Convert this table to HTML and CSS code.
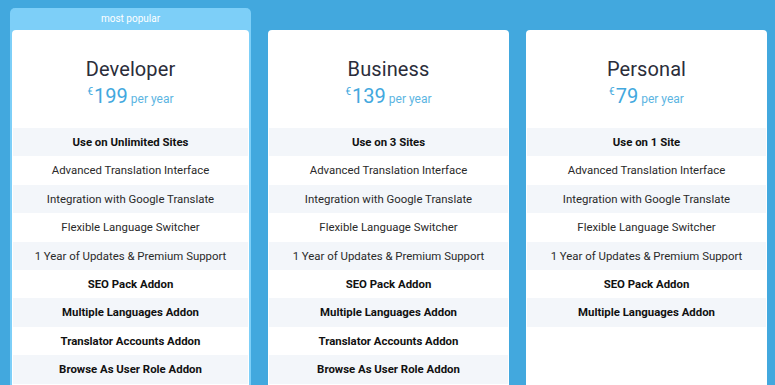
FILE: index.html
```html
<!DOCTYPE html>
<html lang="en">
  <head>
    <meta charset="UTF-8" />
    <meta name="viewport" content="width=device-width, initial-scale=1.0" />
    <title>Pricing</title>
    <link rel="stylesheet" href="styles.css">
  </head>
  <body>
    <div class="plans">
      <div class="plan popular">
        <div class="badge">most popular</div>
        <div class="card">
          <div class="head">
            <h2>Developer</h2>
            <div class="price"><sup>€</sup>199 <span>per year</span></div>
          </div>
          <ul class="features">
            <li class="bold">Use on Unlimited Sites</li>
            <li>Advanced Translation Interface</li>
            <li>Integration with Google Translate</li>
            <li>Flexible Language Switcher</li>
            <li>1 Year of Updates &amp; Premium Support</li>
            <li class="bold">SEO Pack Addon</li>
            <li class="bold">Multiple Languages Addon</li>
            <li class="bold">Translator Accounts Addon</li>
            <li class="bold">Browse As User Role Addon</li>
          </ul>
        </div>
      </div>
      <div class="plan">
        <div class="card">
          <div class="head">
            <h2>Business</h2>
            <div class="price"><sup>€</sup>139 <span>per year</span></div>
          </div>
          <ul class="features">
            <li class="bold">Use on 3 Sites</li>
            <li>Advanced Translation Interface</li>
            <li>Integration with Google Translate</li>
            <li>Flexible Language Switcher</li>
            <li>1 Year of Updates &amp; Premium Support</li>
            <li class="bold">SEO Pack Addon</li>
            <li class="bold">Multiple Languages Addon</li>
            <li class="bold">Translator Accounts Addon</li>
            <li class="bold">Browse As User Role Addon</li>
          </ul>
        </div>
      </div>
      <div class="plan">
        <div class="card">
          <div class="head">
            <h2>Personal</h2>
            <div class="price"><sup>€</sup>79 <span>per year</span></div>
          </div>
          <ul class="features">
            <li class="bold">Use on 1 Site</li>
            <li>Advanced Translation Interface</li>
            <li>Integration with Google Translate</li>
            <li>Flexible Language Switcher</li>
            <li>1 Year of Updates &amp; Premium Support</li>
            <li class="bold">SEO Pack Addon</li>
            <li class="bold">Multiple Languages Addon</li>
          </ul>
        </div>
      </div>
    </div>
  </body>
</html>
```

FILE: styles.css
```css
body {
  font-family: Roboto, "Liberation Sans", sans-serif;
  background-color: #42a8de;
  margin: 0;
  overflow: hidden;
}
.plans {
  display: flex;
  gap: 17px;
  padding: 8px 8px 0 10px;
  align-items: flex-start;
}
.plan {
  width: 241px;
  margin-top: 22px;
  box-sizing: border-box;
}
.plan.popular {
  margin-top: 0;
  background: #7dcff8;
  border: 2px solid #7dcff8;
  border-top: none;
  border-radius: 5px 5px 0 0;
}
.badge {
  height: 22px;
  line-height: 22px;
  text-align: center;
  color: #fff;
  font-size: 10px;
}
.card {
  background: #fff;
  border-radius: 4px 4px 0 0;
  height: 400px;
  padding: 0 1px;
}
.head {
  text-align: center;
  padding: 27px 0 17px;
}
h2 {
  margin: 0 0 3px;
  font-size: 20px;
  line-height: 24px;
  font-weight: 400;
  letter-spacing: 0.1px;
  color: #2b2d3a;
}
.price {
  font-size: 20px;
  line-height: 24px;
  color: #42a8de;
}
.price sup {
  font-size: 10px;
  vertical-align: 8px;
  line-height: 0;
  margin-right: 1px;
}
.price span {
  font-size: 12px;
  color: #5cb5e2;
  margin-left: -2px;
}
.features {
  list-style: none;
  margin: 0;
  padding: 0;
}
.features li {
  height: 28.4px;
  line-height: 28.4px;
  text-align: center;
  font-size: 11.4px;
  color: #2a2a2a;
}
.features li:nth-child(odd) {
  background: #f3f6fa;
}
.features li.bold {
  font-weight: 700;
  color: #111;
}
```
